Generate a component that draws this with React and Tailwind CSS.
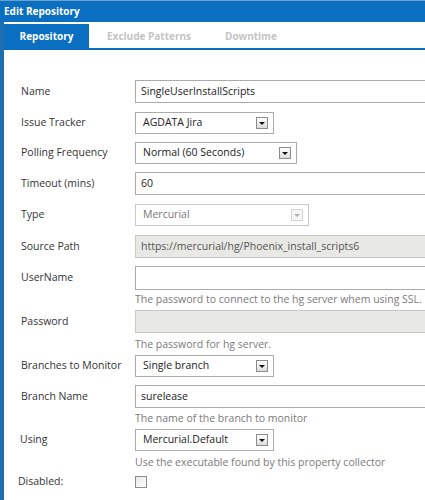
import React from "react";

const font = { fontFamily: '"Open Sans", "Noto Sans", sans-serif' };

const DropButton = ({ disabled }) => (
  <span
    className={`flex items-center justify-center w-[12px] h-[12px] border ${
      disabled
        ? "border-[#d4d4d4] bg-[#f6f6f6]"
        : "border-[#8c8c8c] bg-gradient-to-b from-[#ffffff] to-[#dcdcdc]"
    }`}
  >
    <span
      className={`w-0 h-0 border-l-[3px] border-r-[3px] border-t-[3px] border-l-transparent border-r-transparent ${
        disabled ? "border-t-[#b0b0b0]" : "border-t-[#111111]"
      }`}
    />
  </span>
);

const Row = ({ label, top, h = 23, labelClass = "pl-[17px]", children }) => (
  <div className={`flex items-center ${top}`} style={{ height: h }}>
    <div className={`w-[131px] shrink-0 text-[#333333] whitespace-nowrap ${labelClass}`}>{label}</div>
    {children}
  </div>
);

const TextBox = ({ value, disabled }) => (
  <div
    className={`w-[320px] h-full shrink-0 flex items-center pl-[5px] border whitespace-nowrap ${
      disabled ? "border-[#c8c8c8] bg-[#e8e8e4] text-[#555555]" : "border-[#ababab] bg-white text-[#222222]"
    }`}
  >
    {value}
  </div>
);

const Select = ({ value, width, disabled }) => (
  <div
    className={`h-full shrink-0 flex items-center justify-between pl-[7px] pr-[5px] border whitespace-nowrap ${
      disabled ? "border-[#c8c8c8] text-[#777777]" : "border-[#ababab] text-[#222222]"
    } bg-white`}
    style={{ width }}
  >
    <span>{value}</span>
    <DropButton disabled={disabled} />
  </div>
);

const Help = ({ text, top }) => (
  <div className={`pl-[131px] text-[#7a7a7a] leading-[14px] whitespace-nowrap ${top}`}>{text}</div>
);

export default function App() {
  return (
    <div className="w-[425px] h-[500px] overflow-hidden bg-white text-[10.5px]" style={font}>
      <div className="h-[22px] bg-[#0a6fc1] flex items-center pl-[4px] text-white text-[10px] font-bold border-t border-[#6e9fc8]">
        Edit Repository
      </div>
      <div className="flex h-[478px]">
        <div className="w-[4px] shrink-0 bg-[#1d6fb0]" />
        <div className="flex-1 overflow-hidden">
          <div className="mt-[2px] flex h-[24px] border-b-2 border-[#0a6fc1] box-content text-[10px] font-bold">
            <div className="w-[85px] bg-[#0a6fc1] text-white flex items-center justify-center">
              Repository
            </div>
            <div className="px-[18px] text-[#c4c4c4] flex items-center">Exclude Patterns</div>
            <div className="px-[16px] text-[#c4c4c4] flex items-center">Downtime</div>
          </div>

          <Row label="Name" top="mt-[30px]">
            <TextBox value="SingleUserInstallScripts" />
          </Row>
          <Row label="Issue Tracker" top="mt-[9px]" h={22}>
            <Select value="AGDATA Jira" width={139} />
          </Row>
          <Row label="Polling Frequency" top="mt-[8px]" h={22}>
            <Select value="Normal (60 Seconds)" width={162} />
          </Row>
          <Row label="Timeout (mins)" top="mt-[8px]">
            <TextBox value="60" />
          </Row>
          <Row label="Type" top="mt-[9px]" h={22}>
            <Select value="Mercurial" width={174} disabled />
          </Row>
          <Row label="Source Path" top="mt-[9px]">
            <TextBox value="https://mercurial/hg/Phoenix_install_scripts6" disabled />
          </Row>
          <Row label="UserName" top="mt-[8px]" h={24}>
            <TextBox value="" />
          </Row>
          <Help text="The password to connect to the hg server whem using SSL." top="mt-[2px]" />
          <Row label="Password" top="mt-[4px]">
            <TextBox value="" disabled />
          </Row>
          <Help text="The password for hg server." top="mt-[4px]" />
          <Row label="Branches to Monitor" top="mt-[4px]" h={22}>
            <Select value="Single branch" width={139} />
          </Row>
          <Row label="Branch Name" top="mt-[8px]">
            <TextBox value="surelease" />
          </Row>
          <Help text="The name of the branch to monitor" top="mt-[3px]" />
          <Row label="Using" top="mt-[4px]" h={22} labelClass="pl-[16px]">
            <Select value="Mercurial.Default" width={139} />
          </Row>
          <Help text="Use the executable found by this property collector" top="mt-[4px]" />
          <Row label="Disabled:" top="mt-[7px]" h={12} labelClass="pl-[14px]">
            <span className="w-[12px] h-[12px] border border-[#8c8c8c] bg-gradient-to-br from-[#e8e8e8] to-[#ffffff]" />
          </Row>
        </div>
      </div>
    </div>
  );
}
